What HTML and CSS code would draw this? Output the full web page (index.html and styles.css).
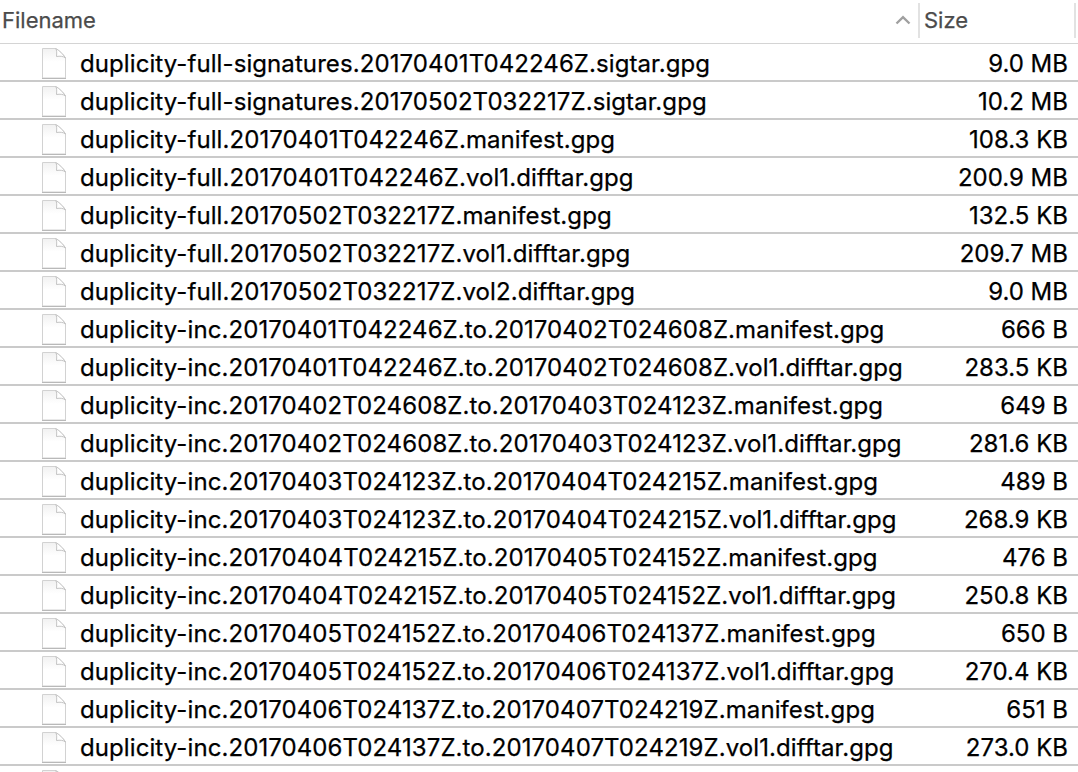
FILE: index.html
```
<!DOCTYPE html>
<html lang="en">
<head>
<meta charset="utf-8">
<title>Files</title>
<link rel="stylesheet" href="styles.css">
</head>
<body>
<svg class="defs" width="0" height="0" aria-hidden="true">
  <defs>
    <linearGradient id="paper" x1="0" y1="0" x2="0" y2="1"><stop offset="0" stop-color="#f1f1f1"/><stop offset=".45" stop-color="#fff"/></linearGradient>
    <symbol id="file" viewBox="0 0 26 33">
      <path d="M1.5 1.5H14.5C17 2.5 23 8 24.5 11V31H1.5Z" fill="url(#paper)" stroke="#d2d2d2"/>
      <path d="M1 31.5H25" stroke="#b9b9b9"/>
      <path d="M14.5 1.5C16 3 15.8 6 15.5 9.5C19 9 22 9 24.5 11C22 7 18 3 14.5 1.5Z" fill="#fff" stroke="#c4c4c4"/>
    </symbol>
  </defs>
</svg>
<header class="head">
  <div class="col-name"><span>Filename</span><svg class="sort" viewBox="0 0 16 10"><path d="M1.5 8.5 8 2.2 14.5 8.5" fill="none" stroke="#a0a0a0" stroke-width="2.4"/></svg></div>
  <div class="col-size">Size</div>
</header>
<main class="list" id="list"></main>
<script src="files.js"></script>
</body>
</html>
```
FILE: styles.css
```
* { box-sizing: border-box; }
body { margin: 0; width: 1078px; height: 772px; overflow: hidden; background: #fff; color: #000; font-family: Inter, "Liberation Sans", sans-serif; -webkit-text-stroke: 0.25px; }
.defs { position: absolute; }
.head { display: flex; height: 44px; padding-top: 3px; border-bottom: 1px solid #d4d4d4; color: #4b4b4b; font-size: 22px; line-height: 34px; }
.col-name { display: flex; align-items: flex-start; justify-content: space-between; width: 918px; height: 35px; padding: 0 7px 0 2px; }
.sort { width: 16px; height: 10px; margin-top: 12px; }
.col-size { width: 158px; height: 35px; padding-left: 4px; border-left: 2px solid #e2e2e2; border-right: 2px solid #e2e2e2; }
.row { display: flex; align-items: flex-start; height: 38px; padding: 0 10px 0 41px; border-bottom: 2px solid #cacaca; font-size: 24px; line-height: 40px; white-space: nowrap; }
.icon { width: 26px; height: 33px; margin: 3px 13px 0 0; flex: none; }
.name { letter-spacing: 0.085px; font-variant-ligatures: common-ligatures contextual; }
.size { margin-left: auto; }
```
FILE: files.js
```
const files = [
  ["duplicity-full-signatures.20170401T042246Z.sigtar.gpg", "9.0 MB"],
  ["duplicity-full-signatures.20170502T032217Z.sigtar.gpg", "10.2 MB"],
  ["duplicity-full.20170401T042246Z.manifest.gpg", "108.3 KB"],
  ["duplicity-full.20170401T042246Z.vol1.difftar.gpg", "200.9 MB"],
  ["duplicity-full.20170502T032217Z.manifest.gpg", "132.5 KB"],
  ["duplicity-full.20170502T032217Z.vol1.difftar.gpg", "209.7 MB"],
  ["duplicity-full.20170502T032217Z.vol2.difftar.gpg", "9.0 MB"],
  ["duplicity-inc.20170401T042246Z.to.20170402T024608Z.manifest.gpg", "666 B"],
  ["duplicity-inc.20170401T042246Z.to.20170402T024608Z.vol1.difftar.gpg", "283.5 KB"],
  ["duplicity-inc.20170402T024608Z.to.20170403T024123Z.manifest.gpg", "649 B"],
  ["duplicity-inc.20170402T024608Z.to.20170403T024123Z.vol1.difftar.gpg", "281.6 KB"],
  ["duplicity-inc.20170403T024123Z.to.20170404T024215Z.manifest.gpg", "489 B"],
  ["duplicity-inc.20170403T024123Z.to.20170404T024215Z.vol1.difftar.gpg", "268.9 KB"],
  ["duplicity-inc.20170404T024215Z.to.20170405T024152Z.manifest.gpg", "476 B"],
  ["duplicity-inc.20170404T024215Z.to.20170405T024152Z.vol1.difftar.gpg", "250.8 KB"],
  ["duplicity-inc.20170405T024152Z.to.20170406T024137Z.manifest.gpg", "650 B"],
  ["duplicity-inc.20170405T024152Z.to.20170406T024137Z.vol1.difftar.gpg", "270.4 KB"],
  ["duplicity-inc.20170406T024137Z.to.20170407T024219Z.manifest.gpg", "651 B"],
  ["duplicity-inc.20170406T024137Z.to.20170407T024219Z.vol1.difftar.gpg", "273.0 KB"],
  ["", ""]
];
document.getElementById("list").innerHTML = files.map(([name, size]) =>
  `<div class="row"><svg class="icon"><use href="#file"/></svg><span class="name">${name}</span><span class="size">${size}</span></div>`
).join("");
```
